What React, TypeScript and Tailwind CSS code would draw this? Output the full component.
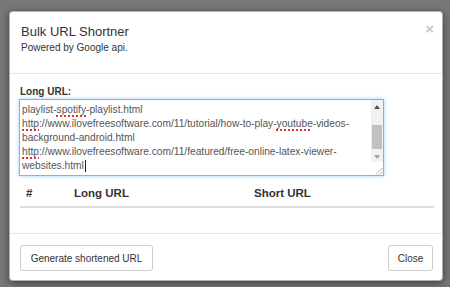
import React from "react";

const Spell = ({ children }: { children: React.ReactNode }) => (
  <span className="underline decoration-dotted decoration-[#e53030] decoration-[1.5px] underline-offset-[2px]">
    {children}
  </span>
);

export default function App() {
  return (
    <div className="w-[450px] h-[287px] bg-[#787878] pt-[11px] pl-[9px] font-['Liberation_Sans',Arial,sans-serif] overflow-hidden">
      <div className="w-[434px] bg-white rounded-[4px] border border-black/30 shadow-[0_2px_8px_rgba(0,0,0,0.5)] flex flex-col">
        {/* header */}
        <div className="relative pt-[11px] pb-[11px] pl-[11px] border-b border-[#e5e5e5]">
          <div className="text-[13px] leading-[18px] text-[#333]">Bulk URL Shortner</div>
          <div className="text-[10px] leading-[14px] text-[#333] mb-[7px]">Powered by Google api.</div>
          <div className="absolute right-[8px] top-[9px] text-[15px] leading-[16px] font-bold text-[#c8c8c8]">×</div>
        </div>
        {/* body */}
        <div className="pt-[11px] pl-[10px] pr-[8px] pb-[25px]">
          <div className="text-[10px] leading-[14px] font-bold text-[#333]">Long URL:</div>
          <div className="relative -ml-px w-[365px] h-[77px] border border-[#7fb4e6] shadow-[0_0_4px_rgba(102,175,233,0.6)] bg-white flex">
            <div className="flex-1 pl-[2px] pt-[3px] text-[10.2px] leading-[14px] text-[#555] whitespace-pre overflow-hidden">
              <div>
                playlist-<Spell>spotify</Spell>-playlist.html
              </div>
              <div>
                <Spell>http</Spell>://www.ilovefreesoftware.com/11/tutorial/how-to-play-<Spell>youtube</Spell>-videos-
              </div>
              <div>background-android.html</div>
              <div>
                <Spell>http</Spell>://www.ilovefreesoftware.com/11/featured/free-online-latex-viewer-
              </div>
              <div className="flex items-center">
                websites.html<span className="inline-block w-px h-[12px] bg-[#222] ml-px" />
              </div>
            </div>
            {/* scrollbar */}
            <div className="w-[12px] flex flex-col">
              <div className="flex-1 bg-[#f1f1f1] flex flex-col items-center">
                <div className="h-[13px] flex items-center justify-center">
                  <svg width="6" height="4" viewBox="0 0 6 4">
                    <polygon points="3,0 6,4 0,4" fill="#505050" />
                  </svg>
                </div>
                <div className="h-[12px]" />
                <div className="w-[10px] h-[24px] bg-[#c1c1c1]" />
                <div className="flex-1" />
                <div className="h-[10px] flex items-center justify-center">
                  <svg width="6" height="4" viewBox="0 0 6 4">
                    <polygon points="0,0 6,0 3,4" fill="#a3a3a3" />
                  </svg>
                </div>
              </div>
              <div className="h-[13px] bg-white flex items-end justify-end">
                <svg width="8" height="8" viewBox="0 0 8 8">
                  <line x1="7.5" y1="1" x2="1" y2="7.5" stroke="#9a9a9a" strokeWidth="0.8" />
                  <line x1="7.5" y1="4.5" x2="4.5" y2="7.5" stroke="#9a9a9a" strokeWidth="0.8" />
                </svg>
              </div>
            </div>
          </div>
          {/* table */}
          <div className="mt-[5px] grid grid-cols-[48px_180px_1fr] h-[27px] items-center text-[11.5px] leading-[15px] font-bold text-[#333] border-b-2 border-[#dddddd]">
            <div className="pl-[6px]">#</div>
            <div className="pl-[6px]">Long URL</div>
            <div className="pl-[6px]">Short URL</div>
          </div>
        </div>
        {/* footer */}
        <div className="border-t border-[#e5e5e5] pt-[11px] pb-[9px] pl-[10px] pr-[9px] flex justify-between">
          <div className="w-[133px] h-[26px] border border-[#cccccc] rounded-[3px] flex items-center justify-center text-[10px] text-[#333]">
            Generate shortened URL
          </div>
          <div className="w-[45px] h-[26px] border border-[#cccccc] rounded-[3px] flex items-center justify-center text-[10px] text-[#333]">
            Close
          </div>
        </div>
      </div>
    </div>
  );
}
